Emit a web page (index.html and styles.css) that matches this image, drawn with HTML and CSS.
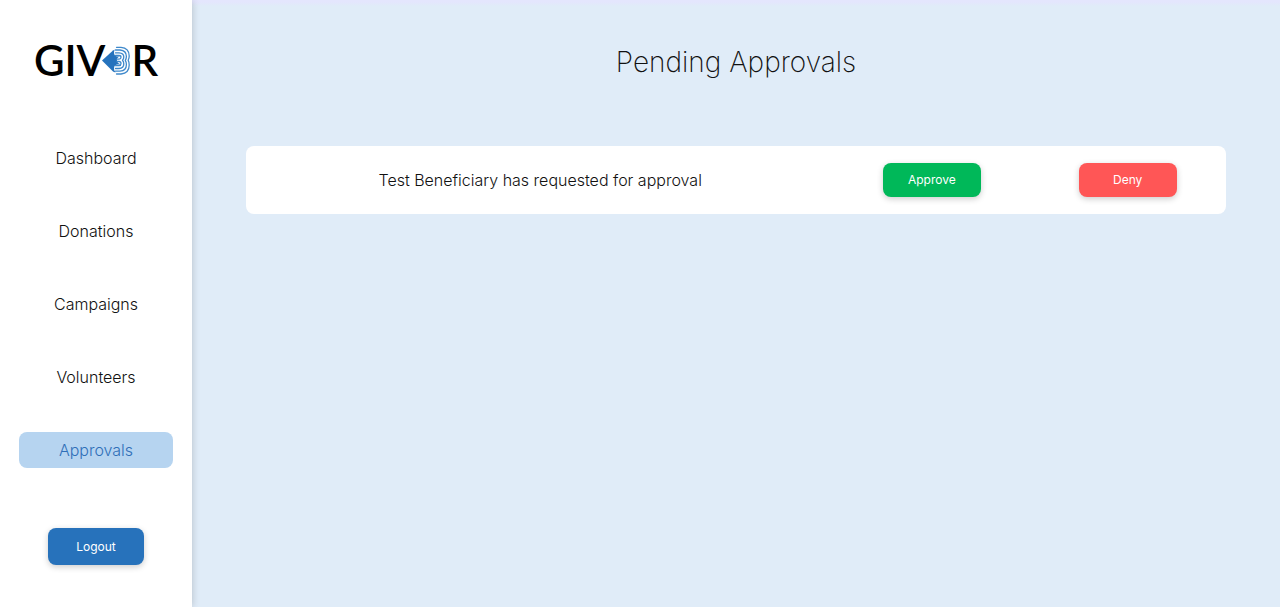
FILE: index.html
```
<!DOCTYPE html>
<html lang="en">
<head>
<meta charset="utf-8">
<meta name="viewport" content="width=device-width, initial-scale=1">
<title>Pending Approvals</title>
<link rel="stylesheet" href="styles.css">
</head>
<body>
<div class="app">
  <aside class="sidebar">
    <a class="logo" href="#" aria-label="GIV3R home">
      <span>GIV</span>
      <svg class="logo-mark" viewBox="0 0 30 34" aria-hidden="true">
        <path fill="#2673bd" d="M1 17.500 12 7.500Q14 6 16 7.500L21 12V24L16 28.500Q14 30 12 28.500Z"/>
        <g fill="none" stroke-linecap="round" stroke-linejoin="round">
          <path stroke="#fff" stroke-width="8" d="M17 9.500H19Q23 10 23 13T20 17.200Q23 18.500 23 21.500T19 25.500H17"/>
          <g stroke="#3f89cb" stroke-width="1.300">
            <path d="M14.500 12.500H18Q20 12.500 20 14.200T18 16.200H16M16 18.500H18Q20 18.500 20 20.500T18 22.700H14.500"/>
            <path d="M14.500 9.800H18Q22.800 10 22.800 14Q22.800 16 21.500 17.300Q22.800 18.700 22.800 21Q22.800 25.200 18 25.500H14.500"/>
            <path d="M14.500 7H19Q25.400 7.500 25.400 13.500Q25.400 15.500 24.300 17.300Q25.400 19 25.400 21.500Q25.400 27.700 19 28.200H14.500"/>
            <path d="M15.500 4.300H20Q28.200 5 28.200 13Q28.200 15.500 27.200 17.300Q28.200 19 28.200 22Q28.200 30.200 20 31H15.500"/>
          </g>
        </g>
      </svg>
      <span>R</span>
    </a>
    <nav class="nav" aria-label="Main">
      <a class="nav-link" href="#">Dashboard</a>
      <a class="nav-link" href="#">Donations</a>
      <a class="nav-link" href="#">Campaigns</a>
      <a class="nav-link" href="#">Volunteers</a>
      <a class="nav-link nav-link-active" href="#" aria-current="page">Approvals</a>
    </nav>
    <button class="button button-logout" type="button">Logout</button>
  </aside>
  <main class="main">
    <h1 class="title">Pending Approvals</h1>
    <section class="request">
      <p class="request-text">Test Beneficiary has requested for approval</p>
      <button class="button button-approve" type="button">Approve</button>
      <button class="button button-deny" type="button">Deny</button>
    </section>
  </main>
</div>
</body>
</html>
```
FILE: styles.css
```
* { box-sizing: border-box; }

body {
  margin: 0;
  font-family: Inter, "Open Sans", sans-serif;
  font-weight: 300;
  color: #111;
}

.app {
  display: grid;
  grid-template-columns: 15% 1fr;
  min-height: 100vh;
}

.sidebar {
  display: flex;
  flex-direction: column;
  align-items: center;
  padding: 36px 0;
  background: #fff;
  box-shadow: 0 0 8px rgba(0, 0, 0, 0.2);
  z-index: 1;
}

.logo {
  display: flex;
  align-items: center;
  height: 48px;
  color: #000;
  font: 600 42px/48px Lato, sans-serif;
  text-decoration: none;
}

.logo-mark {
  width: 30px;
  height: 34px;
  margin-left: -4px;
}

.nav {
  display: flex;
  flex-direction: column;
  gap: 37px;
  width: 80%;
  margin-top: 56px;
}

.nav-link {
  border-radius: 8px;
  color: #111;
  font-size: 16px;
  line-height: 36px;
  text-align: center;
  text-decoration: none;
}

.nav-link-active {
  background: #b6d4f0;
  color: #2f6fb8;
}

.button {
  height: 34px;
  border: 0;
  border-radius: 8px;
  color: #fff;
  font: 400 12px/16px Inter, "Open Sans", sans-serif;
  box-shadow: 0 2px 6px rgba(0, 0, 0, 0.2);
  cursor: pointer;
}

.button-logout {
  width: 50%;
  height: 37px;
  margin-top: 60px;
  background: #2772bb;
}

.main {
  padding: 40px 5% 0;
  background: linear-gradient(#e4e6fd 2px, #e0ecf8 6px);
}

.title {
  margin: 0 0 62px;
  font-size: 28px;
  font-weight: 200;
  line-height: 44px;
  text-align: center;
}

.request {
  display: grid;
  grid-template-columns: 3fr 1fr 1fr;
  align-items: center;
  justify-items: center;
  min-height: 68px;
  border-radius: 8px;
  background: #fff;
}

.request-text {
  margin: 0;
  font-size: 16px;
  line-height: 24px;
}

.button-approve,
.button-deny {
  width: 50%;
}

.button-approve { background: #00b859; }
.button-deny { background: #ff5656; }
```
